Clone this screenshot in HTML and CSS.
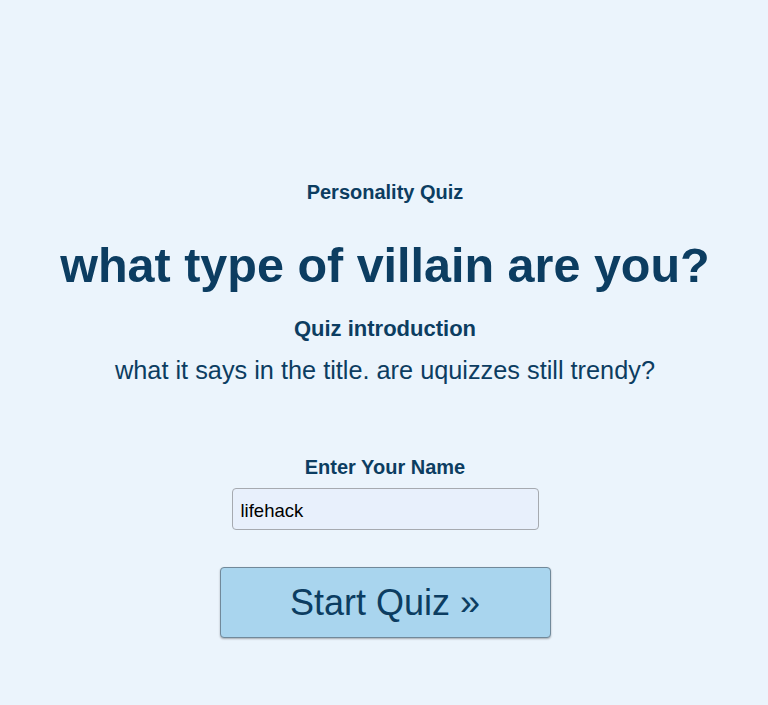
FILE: index.html
```html
<!DOCTYPE html>
<html lang="en">
<head>
<meta charset="utf-8">
<title>Personality Quiz</title>
<link rel="stylesheet" href="styles.css">
</head>
<body>
<main class="quiz">
  <p class="kicker">Personality Quiz</p>
  <h1 class="title">what type of villain are you?</h1>
  <h2 class="intro-head">Quiz introduction</h2>
  <p class="intro">what it says in the title. are uquizzes still trendy?</p>
  <form class="start">
    <label class="name-label" for="name">Enter Your Name</label>
    <input class="name-input" id="name" type="text" value="lifehack">
    <button class="start-btn" type="button">Start Quiz &raquo;</button>
  </form>
</main>
</body>
</html>
```
FILE: styles.css
```css
html, body {
  margin: 0;
  padding: 0;
}
body {
  background: #ebf4fc;
  color: #0c3d61;
  font-family: "Liberation Sans", Arial, sans-serif;
  min-height: 705px;
}
.quiz {
  display: flex;
  flex-direction: column;
  align-items: center;
  text-align: center;
  padding: 179px 0 0 2px;
}
.kicker {
  margin: 0;
  font-size: 20px;
  font-weight: bold;
  line-height: 26px;
}
.title {
  margin: 32px 0 0;
  font-size: 48.5px;
  font-weight: bold;
  line-height: 56px;
}
.intro-head {
  margin: 22px 0 0;
  font-size: 22px;
  font-weight: bold;
  line-height: 28px;
}
.intro {
  margin: 12px 0 0;
  font-size: 25.3px;
  line-height: 30px;
}
.start {
  display: flex;
  flex-direction: column;
  align-items: center;
  margin-top: 69px;
}
.name-label {
  font-size: 20px;
  font-weight: bold;
  line-height: 26px;
}
.name-input {
  box-sizing: border-box;
  margin: 8px 0 0;
  width: 307px;
  height: 42px;
  padding: 3px 8px 0;
  border: 1px solid #a6aab0;
  border-radius: 4px;
  background: #e8f0fc;
  color: #000;
  font-family: "Liberation Sans", Arial, sans-serif;
  font-size: 18.5px;
}
.start-btn {
  box-sizing: border-box;
  margin: 37px 0 0;
  width: 331px;
  height: 71px;
  border: 1px solid #71899a;
  border-radius: 4px;
  background: #a9d5ee;
  color: #0c3d61;
  font-family: "Liberation Sans", Arial, sans-serif;
  font-size: 36px;
  box-shadow: 0 1px 2px rgba(0,0,0,0.3);
  cursor: pointer;
}
```
